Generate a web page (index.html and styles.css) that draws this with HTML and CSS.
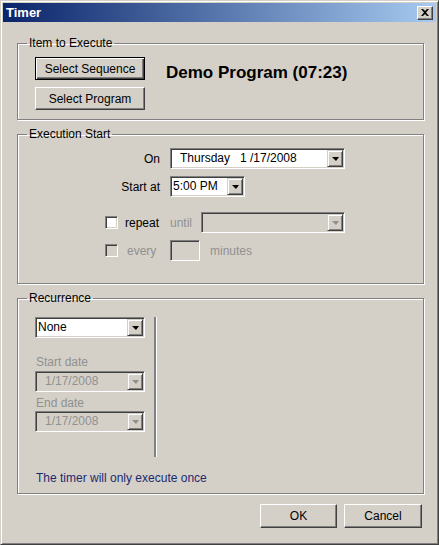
FILE: index.html
```html
<!DOCTYPE html>
<html lang="en">
<head>
    <meta charset="UTF-8">
    <title>Timer</title>
    <link rel="stylesheet" href="styles.css">
</head>
<body>
    <div class="window">
        <div class="titlebar">
            <span class="title">Timer</span>
            <span class="close-btn">
                <svg width="8" height="7" viewBox="0 0 8 7"><path d="M0 0h2l2 2 2-2h2L5 3.5 8 7H6L4 5 2 7H0l3-3.5z" fill="#000"/></svg>
            </span>
        </div>

        <div class="content">
            <fieldset class="group">
                <legend>Item to Execute</legend>
                <div class="item-row">
                    <div class="item-buttons">
                        <div class="btn btn-default"><span>Select Sequence</span></div>
                        <div class="btn">Select Program</div>
                    </div>
                    <div class="program-name">Demo Program (07:23)</div>
                </div>
            </fieldset>

            <fieldset class="group group-start">
                <legend>Execution Start</legend>
                <div class="start-grid">
                    <label class="field-label">On</label>
                    <div class="combo combo-date">
                        <span class="combo-value"><span class="day">Thursday</span>1 /17/2008</span>
                        <span class="combo-arrow"><i></i></span>
                    </div>
                    <label class="field-label">Start at</label>
                    <div class="combo combo-time">
                        <span class="combo-value">5:00 PM</span>
                        <span class="combo-arrow"><i></i></span>
                    </div>
                </div>
                <div class="check-row repeat-row">
                    <div class="check-cell">
                        <span class="checkbox"></span>
                        <span>repeat</span>
                    </div>
                    <span class="muted until">until</span>
                    <div class="combo combo-until disabled">
                        <span class="combo-value"></span>
                        <span class="combo-arrow"><i></i></span>
                    </div>
                </div>
                <div class="check-row">
                    <div class="check-cell">
                        <span class="checkbox disabled"></span>
                        <span class="muted every">every</span>
                    </div>
                    <span class="textbox disabled"></span>
                    <span class="muted minutes">minutes</span>
                </div>
            </fieldset>

            <fieldset class="group group-recur">
                <legend>Recurrence</legend>
                <div class="recur-row">
                    <div class="recur-col">
                        <div class="combo">
                            <span class="combo-value">None</span>
                            <span class="combo-arrow"><i></i></span>
                        </div>
                        <div class="muted recur-label first">Start date</div>
                        <div class="combo disabled">
                            <span class="combo-value indent">1/17/2008</span>
                            <span class="combo-arrow"><i></i></span>
                        </div>
                        <div class="muted recur-label">End date</div>
                        <div class="combo disabled">
                            <span class="combo-value indent">1/17/2008</span>
                            <span class="combo-arrow"><i></i></span>
                        </div>
                    </div>
                    <div class="separator"></div>
                </div>
                <div class="recur-note">The timer will only execute once</div>
            </fieldset>

            <div class="dialog-buttons">
                <div class="btn btn-ok">OK</div>
                <div class="btn btn-cancel">Cancel</div>
            </div>
        </div>
    </div>
</body>
</html>
```

FILE: styles.css
```css
body {
    margin: 0;
    font-family: 'Liberation Sans', Arial, sans-serif;
    font-size: 12px;
    color: #000;
    background-color: #d4d0c8;
}
.window {
    width: 439px;
    height: 545px;
    box-sizing: border-box;
    background-color: #d4d0c8;
    border: 1px solid;
    border-color: #d4d0c8 #404040 #404040 #d4d0c8;
    box-shadow: inset 1px 1px #fff, inset -1px -1px #808080;
    padding: 2px;
    display: flex;
    flex-direction: column;
}
.titlebar {
    height: 19px;
    padding: 0 3px;
    display: flex;
    align-items: center;
    justify-content: space-between;
    background: linear-gradient(to right, #0a246a, #a6caf0);
    color: #fff;
    font-weight: bold;
    font-size: 13px;
}
.close-btn {
    width: 16px;
    height: 14px;
    box-sizing: border-box;
    display: flex;
    align-items: center;
    justify-content: center;
    background-color: #d4d0c8;
    border: 1px solid;
    border-color: #fff #404040 #404040 #fff;
    box-shadow: inset -1px -1px #808080;
}
.content {
    flex: 1;
    padding: 14px 12px 0 14px;
    display: flex;
    flex-direction: column;
}

/* group boxes */
.group {
    margin: 0;
    padding: 7px 17px 9px 17px;
    border: 1px solid #808080;
    box-shadow: inset 1px 1px #fff, 1px 1px #fff;
    min-width: 0;
}
.group legend {
    padding: 0 2px;
    margin-left: -8px;
    line-height: 14px;
}
.group-start {
    margin-top: 7px;
    padding-bottom: 22px;
}
.group-recur {
    margin-top: 7px;
    padding-top: 12px;
    padding-bottom: 8px;
}

/* buttons */
.btn {
    box-sizing: border-box;
    height: 23px;
    display: flex;
    align-items: center;
    justify-content: center;
    background-color: #d4d0c8;
    border: 1px solid;
    border-color: #fff #404040 #404040 #fff;
    box-shadow: inset -1px -1px #808080;
}
.btn-default {
    border: 1px solid #000;
    box-shadow: inset 1px 1px #fff, inset -1px -1px #404040, inset -2px -2px #808080;
}
.item-row {
    display: flex;
    align-items: flex-start;
}
.item-buttons {
    width: 110px;
    display: flex;
    flex-direction: column;
    gap: 7px;
}
.program-name {
    margin-left: 21px;
    margin-top: 6px;
    font-size: 17px;
    font-weight: bold;
}

/* combo boxes */
.combo {
    box-sizing: border-box;
    height: 21px;
    display: flex;
    background-color: #fff;
    border: 1px solid;
    border-color: #808080 #fff #fff #808080;
    box-shadow: inset 1px 1px #404040, inset -1px -1px #d4d0c8;
}
.combo-value {
    flex: 1;
    padding-left: 2px;
    line-height: 19px;
    white-space: nowrap;
    overflow: hidden;
}
.combo-value.indent {
    padding-left: 9px;
}
.combo-arrow {
    box-sizing: border-box;
    width: 16px;
    height: 17px;
    margin: 1px 1px 1px 0;
    display: flex;
    align-items: center;
    justify-content: center;
    background-color: #d4d0c8;
    border: 1px solid;
    border-color: #d4d0c8 #404040 #404040 #d4d0c8;
    box-shadow: inset 1px 1px #fff, inset -1px -1px #808080;
}
.combo-arrow i {
    width: 0;
    height: 0;
    border-left: 4px solid transparent;
    border-right: 3px solid transparent;
    border-top: 4px solid #000;
}
.combo.disabled {
    background-color: #d4d0c8;
    color: #909090;
}
.combo.disabled .combo-arrow i {
    border-top-color: #909090;
}
.textbox {
    box-sizing: border-box;
    width: 30px;
    height: 21px;
    background-color: #fff;
    border: 1px solid;
    border-color: #808080 #fff #fff #808080;
    box-shadow: inset 1px 1px #404040, inset -1px -1px #d4d0c8;
}
.textbox.disabled {
    background-color: #d4d0c8;
}

/* execution start */
.start-grid {
    display: grid;
    grid-template-columns: 125px auto;
    column-gap: 10px;
    row-gap: 7px;
    align-items: center;
}
.field-label {
    text-align: right;
}
.combo-date {
    width: 175px;
}
.combo-date .combo-value {
    padding-left: 9px;
}
.combo-date .day {
    display: inline-block;
    width: 60px;
}
.combo-time {
    width: 75px;
}
.check-row {
    display: flex;
    align-items: center;
    height: 21px;
    margin-top: 7px;
    margin-left: 70px;
}
.repeat-row {
    margin-top: 15px;
}
.check-cell {
    width: 65px;
    display: flex;
    align-items: center;
    gap: 7px;
}
.checkbox {
    box-sizing: border-box;
    width: 13px;
    height: 13px;
    background-color: #fff;
    border: 1px solid;
    border-color: #808080 #fff #fff #808080;
    box-shadow: inset 1px 1px #404040, inset -1px -1px #d4d0c8;
}
.checkbox.disabled {
    background-color: #d4d0c8;
}
.muted {
    color: #909090;
}
.every {
    margin-left: 2px;
}
.until {
    width: 31px;
}
.combo-until {
    width: 144px;
}
.minutes {
    margin-left: 10px;
}

/* recurrence */
.recur-row {
    display: flex;
}
.recur-col {
    width: 110px;
}
.recur-label {
    line-height: 14px;
    margin-top: 4px;
    margin-bottom: 1px;
    padding-left: 1px;
}
.recur-label.first {
    margin-top: 17px;
    margin-bottom: 2px;
}
.separator {
    margin-left: 9px;
    height: 140px;
    width: 2px;
    background-color: #808080;
    border-right: 1px solid #fff;
}
.recur-note {
    margin-top: 14px;
    line-height: 14px;
    padding-left: 1px;
    color: #1b2a6e;
}

.dialog-buttons {
    margin-top: 10px;
    margin-right: 2px;
    display: flex;
    justify-content: flex-end;
    gap: 7px;
}
.btn-ok {
    width: 77px;
    height: 24px;
}
.btn-cancel {
    width: 78px;
    height: 24px;
}
```
